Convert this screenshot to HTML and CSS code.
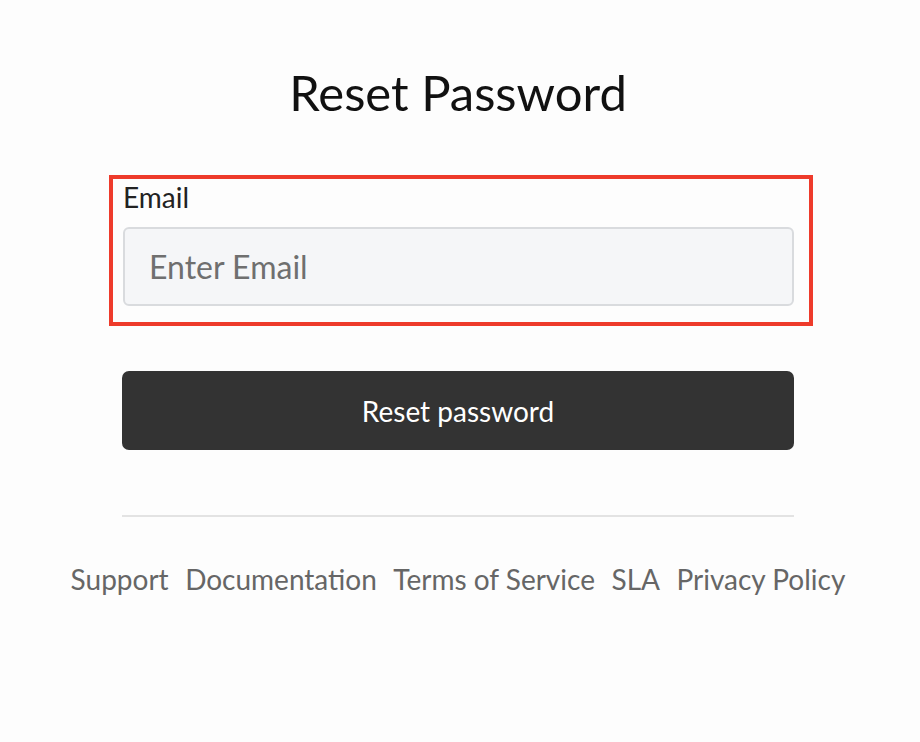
FILE: index.html
```html
<!DOCTYPE html>
<html lang="en">
<head>
<meta charset="utf-8">
<title>Reset Password</title>
<link rel="stylesheet" href="styles.css">
</head>
<body>
<main class="page">
  <h1 class="title">Reset Password</h1>
  <form class="form">
    <div class="field">
      <label class="label" for="email">Email</label>
      <input class="input" id="email" type="email" placeholder="Enter Email">
    </div>
    <button class="button" type="button">Reset password</button>
  </form>
  <hr class="divider">
  <nav class="footer">
    <a href="#">Support</a>
    <a href="#">Documentation</a>
    <a href="#">Terms of Service</a>
    <a href="#">SLA</a>
    <a href="#">Privacy Policy</a>
  </nav>
</main>
</body>
</html>
```
FILE: styles.css
```css
html, body {
  margin: 0;
  padding: 0;
  background: #fdfdfd;
  font-family: Lato, "Liberation Sans", sans-serif;
}
.page {
  display: flex;
  flex-direction: column;
  align-items: center;
  padding: 60px 4px 0 0;
}
.title {
  margin: 0;
  font-size: 49px;
  font-weight: 400;
  line-height: 64px;
  color: #111;
}
.form {
  margin-top: 51px;
  width: 672px;
  display: flex;
  flex-direction: column;
}
.field {
  box-sizing: border-box;
  margin: 0 -19px 0 -13px;
  border: 4px solid #ee3b2b;
  padding: 2px 15px 16px 10px;
  display: flex;
  flex-direction: column;
}
.label {
  font-size: 28px;
  line-height: 32px;
  color: #222;
  margin-bottom: 14px;
}
.input {
  box-sizing: border-box;
  height: 79px;
  width: 671px;
  background: #f5f6f8;
  border: 2px solid #d9dbde;
  border-radius: 6px;
  padding: 0 24px;
  font-family: Lato, "Liberation Sans", sans-serif;
  font-size: 32px;
  color: #222;
  outline: none;
}
.input::placeholder {
  color: #6f6f6f;
}
.button {
  margin-top: 45px;
  width: 672px;
  height: 79px;
  background: #333333;
  color: #fff;
  border: none;
  border-radius: 7px;
  font-family: Lato, "Liberation Sans", sans-serif;
  font-size: 28px;
  cursor: pointer;
}
.divider {
  width: 672px;
  margin: 65px 0 0;
  border: none;
  border-top: 2px solid #e3e3e3;
}
.footer {
  margin-top: 45px;
  display: flex;
  gap: 16.5px;
}
.footer a {
  font-size: 28px;
  line-height: 34px;
  color: #666;
  text-decoration: none;
}
```
